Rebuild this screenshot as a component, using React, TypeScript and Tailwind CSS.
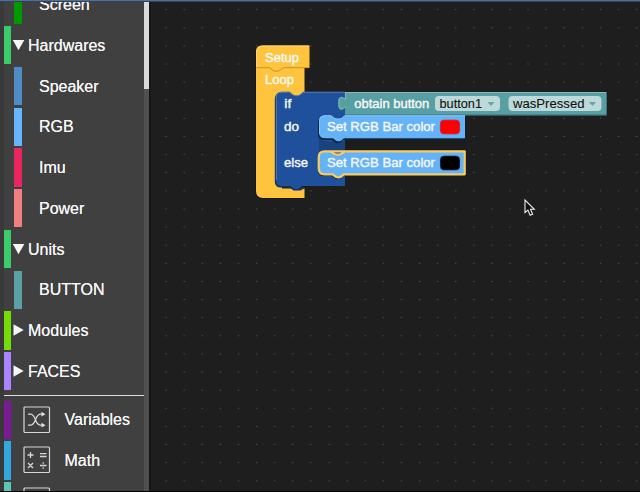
import React from "react";

type Category = {
  label: string;
  color: string;
  level: "group" | "child" | "icon";
  open?: boolean;
  icon?: "shuffle" | "math" | "blank";
};

const upper: Category[] = [
  { label: "Screen", color: "bg-[#009a00]", level: "child" },
  { label: "Hardwares", color: "bg-[#3acb6b]", level: "group", open: true },
  { label: "Speaker", color: "bg-[#4f8ac9]", level: "child" },
  { label: "RGB", color: "bg-[#66b6ff]", level: "child" },
  { label: "Imu", color: "bg-[#ea2560]", level: "child" },
  { label: "Power", color: "bg-[#f08080]", level: "child" },
  { label: "Units", color: "bg-[#3acb6b]", level: "group", open: true },
  { label: "BUTTON", color: "bg-[#5ba0a5]", level: "child" },
  { label: "Modules", color: "bg-[#76dc05]", level: "group" },
  { label: "FACES", color: "bg-[#ab82ff]", level: "group" },
];

const lower: Category[] = [
  { label: "Variables", color: "bg-[#7a1a94]", level: "icon", icon: "shuffle" },
  { label: "Math", color: "bg-[#31a9de]", level: "icon", icon: "math" },
  { label: "", color: "bg-[#5bc8b4]", level: "icon", icon: "blank" },
];

function CategoryIcon({ kind }: { kind: Category["icon"] }) {
  return (
    <svg viewBox="0 0 28 28" className="ml-[11.5px] h-7 w-7 shrink-0" fill="none" stroke="#d8d8d8" strokeWidth="1.2">
      <rect x="1" y="1" width="25.5" height="25.5" rx="1" />
      {kind === "shuffle" && (
        <>
          <path d="M5 8.2h2.2c6.3 0 4.2 11 10.6 11H19M5 19.2h2.2c6.3 0 4.2-11 10.6-11H19" />
          <path d="m18.5 5.8 4 2.4-4 2.4zM18.5 16.8l4 2.4-4 2.4z" fill="#e0e0e0" stroke="none" />
        </>
      )}
      {kind === "math" && (
        <path
          strokeWidth="1.3"
          d="M4.5 9h6M7.5 6v6M17 7.7h6.5M17 10.5h6.5M5 17l5 5M10 17l-5 5M17 19.5h6.5M20.2 16.3v1.5M20.2 21.2v1.5"
        />
      )}
    </svg>
  );
}

function Row({ item }: { item: Category }) {
  return (
    <div className="mb-[2.5px] flex h-[38.25px] shrink-0 items-center">
      <span
        className={`${item.color} h-full shrink-0 ${item.level === "child" ? "ml-[10.4px] w-[7.6px]" : "w-[7px]"}`}
      />
      {item.level === "group" && (
        <svg viewBox="0 0 12 12" className="ml-[2px] h-3 w-3 shrink-0" fill="#f6f6f6">
          {item.open ? <path d="M-.2 1h11.5L5.5 11.2z" /> : <path d="M.5.2v11.5l10.2-5.8z" />}
        </svg>
      )}
      {item.level === "icon" && <CategoryIcon kind={item.icon} />}
      <span
        className={
          item.level === "group"
            ? "ml-[3px] pt-[1.4px]"
            : item.level === "child"
              ? "ml-[17px] pt-[1.4px]"
              : "ml-[14px] pt-[1.4px]"
        }
      >
        {item.label}
      </span>
    </div>
  );
}

function Toolbox() {
  return (
    <aside className="flex h-full w-[149px] shrink-0 bg-[#404040] text-base leading-5 text-[#f6f6f6] [text-shadow:0_0_0.5px_#f6f6f6]">
      <div className="w-1 shrink-0 bg-[#393939]" />
      <div className="flex h-full w-[140px] shrink-0 flex-col overflow-hidden">
        <div className="-mt-[16.7px] flex shrink-0 flex-col">
          {upper.map((item) => (
            <Row key={item.label} item={item} />
          ))}
        </div>
        <div className="mt-[2.3px] mb-[4.4px] h-px shrink-0 bg-[#dedede]" />
        {lower.map((item) => (
          <Row key={item.color} item={item} />
        ))}
      </div>
      <div className="h-full w-[5px] bg-[#505050]">
        <div className="h-[87px] bg-[#d9d9d9]" />
      </div>
    </aside>
  );
}

function Label({ x, y, w, dark, children }: { x: number; y: number; w: number; dark?: boolean; children: string }) {
  return (
    <text
      x={x}
      y={y}
      textLength={w}
      lengthAdjust="spacingAndGlyphs"
      fontSize="13.3"
      fill={dark ? "#111" : "#f8f8f8"}
      stroke={dark ? "#111" : "#f8f8f8"}
      strokeWidth={dark ? 0.1 : 0.4}
    >
      {children}
    </text>
  );
}

const statement =
  "M325 0H465V23H344l-3 2.5q-2.5 1-5 0l-3-2.5H325q-6 0-6-6V6q0-6 6-6H331l3.5 2.7q3.5 1.4 7 0L345 0z";

function Workspace() {
  return (
    <main className="h-full flex-1 bg-[#1e1e1e]">
      <svg viewBox="149 2 491 488" className="block h-[488px] w-[491px]">
        <defs>
          <pattern id="grid" x="157" y="0.6" width="18.1" height="18.12" patternUnits="userSpaceOnUse">
            <path d="M8.4 9h1.4" stroke="#535353" strokeWidth="1" />
          </pattern>
        </defs>
        <rect x="149" y="2" width="2" height="488" fill="#161616" />
        <rect x="151" y="2" width="489" height="488" fill="url(#grid)" />

        {/* Program entry and its loop body */}
        <path d="M262 45.5H309.5V68H304V94H276V188H304V198H263q-7 0-7-7V51.5q0-6 6-6z" fill="#171717" transform="translate(-1 1)" />
        <path d="M256 68V51.5q0-6 6-6H309.5V68z" fill="#ffc43d" />
        <path d="M256 68H304.5V97H282V188.5H304.5V198H263q-7 0-7-7z" fill="#ffc43d" />
        <path d="M256.5 67.7H269.5l4 3q3 1.2 6 0l4-3H309" fill="none" stroke="#b88d2c" strokeWidth=".9" />
        <path d="M256.5 67V52q0-6 6-6H309" fill="none" stroke="#ffd36d" />

        {/* Condition block */}
        <path d="M281 92H290V186.5H281q-6 0-6-6V98q0-6 6-6z" fill="#123264" transform="translate(-.2 1)" />
        <path d="M289 187h15v1.5l-3.5 2h-7z" fill="#123264" />
        <path d="M281.5 91.8H289.5l4 3q3 1.2 6 0l4-3H345V186H302l-3.5 2.6q-2.5 1-5 0l-3.5-2.6H281.5q-5.5 0-5.5-6V98q0-6.2 5.5-6.2z" fill="#1e509b" />
        <path d="M276.3 180V98q0-5.7 5.7-5.7H289.5l4 3q3 1.2 6 0l4-3H345" fill="none" stroke="#6285b6" strokeWidth=".8" />
        <path d="M319 138.5q2 3 7 3H345V151H325q-6 0-6 4z" fill="#19437f" />
        <rect x="345" y="138" width="120" height="12" fill="#1c1c1c" />

        {/* Button value */}
        <path d="M345 92H606.5V115H345V107.5C339 113 338 107 338.5 102S339 94.5 345 99z" fill="#397276" transform="translate(0 .8)" />
        <path d="M345 92H606.5V114.5H345V107.5C339 112 338.5 107 338.5 103S339 95 345 99z" fill="#579fa2" />
        <path d="M345.4 107C339 112 338.8 107 338.8 103S339 95 345.4 99V92.5H606" fill="none" stroke="#8bbdbf" strokeWidth=".9" />
        <rect x="435" y="96" width="65" height="15" rx="4" fill="#bdd9da" />
        <rect x="508.5" y="96" width="93" height="15" rx="4" fill="#bdd9da" />
        <path d="M487.5 102h7l-3.5 4zM589 102h7l-3.5 4z" fill="#64a5a8" />

        {/* Statements in the two branches */}
        <path d={statement} transform="translate(-1 117)" fill="#10243d" />
        <path d={statement} transform="translate(0 115.3)" fill="#64b2f8" />
        <path d="M319.5 134V121.3q0-5.5 5.5-5.5H331l3.5 2.7q3.5 1.4 7 0l3.5-2.7H465" fill="none" stroke="#93c9f9" strokeWidth=".8" />
        <path d={statement} transform="translate(-1.2 153)" fill="#10243d" />
        <path d={statement} transform="translate(-.3 151.3)" fill="#64b2f8" stroke="#f8cc62" strokeWidth="2.2" strokeLinejoin="round" />
        <rect x="440" y="119.8" width="20" height="14.4" rx="4" fill="#f00" stroke="#4b96d9" strokeWidth=".5" />
        <rect x="440" y="155.8" width="20" height="14.4" rx="4" fill="#000" stroke="#4b96d9" strokeWidth=".5" />

        <Label x={265} y={61.5} w={34}>Setup</Label>
        <Label x={265} y={84} w={29}>Loop</Label>
        <Label x={284.3} y={107.5} w={7}>if</Label>
        <Label x={284} y={131} w={15}>do</Label>
        <Label x={284} y={167} w={24}>else</Label>
        <Label x={354.3} y={107.8} w={75}>obtain button</Label>
        <Label x={439.5} y={107.8} w={42.5} dark>button1</Label>
        <Label x={513} y={107.8} w={71.5} dark>wasPressed</Label>
        <Label x={327} y={131.3} w={108}>Set RGB Bar color</Label>
        <Label x={327} y={167.3} w={108}>Set RGB Bar color</Label>

        <path d="M525 200v12.5l2.9-2.4 2.2 5.2 2.5-1-2.1-5h3.8z" fill="#111" stroke="#eee" strokeWidth="1.1" />
      </svg>
    </main>
  );
}

export default function App() {
  return (
    <div className="flex h-[492px] w-[640px] flex-col overflow-hidden bg-[#1e1e1e] font-['Liberation_Sans',Arial,sans-serif]">
      <div className="h-px shrink-0 bg-[#506d9b]" />
      <div className="flex h-[490px] shrink-0 bg-[#354157] pt-px">
        <Toolbox />
        <Workspace />
      </div>
      <div className="h-px shrink-0 bg-black" />
    </div>
  );
}
